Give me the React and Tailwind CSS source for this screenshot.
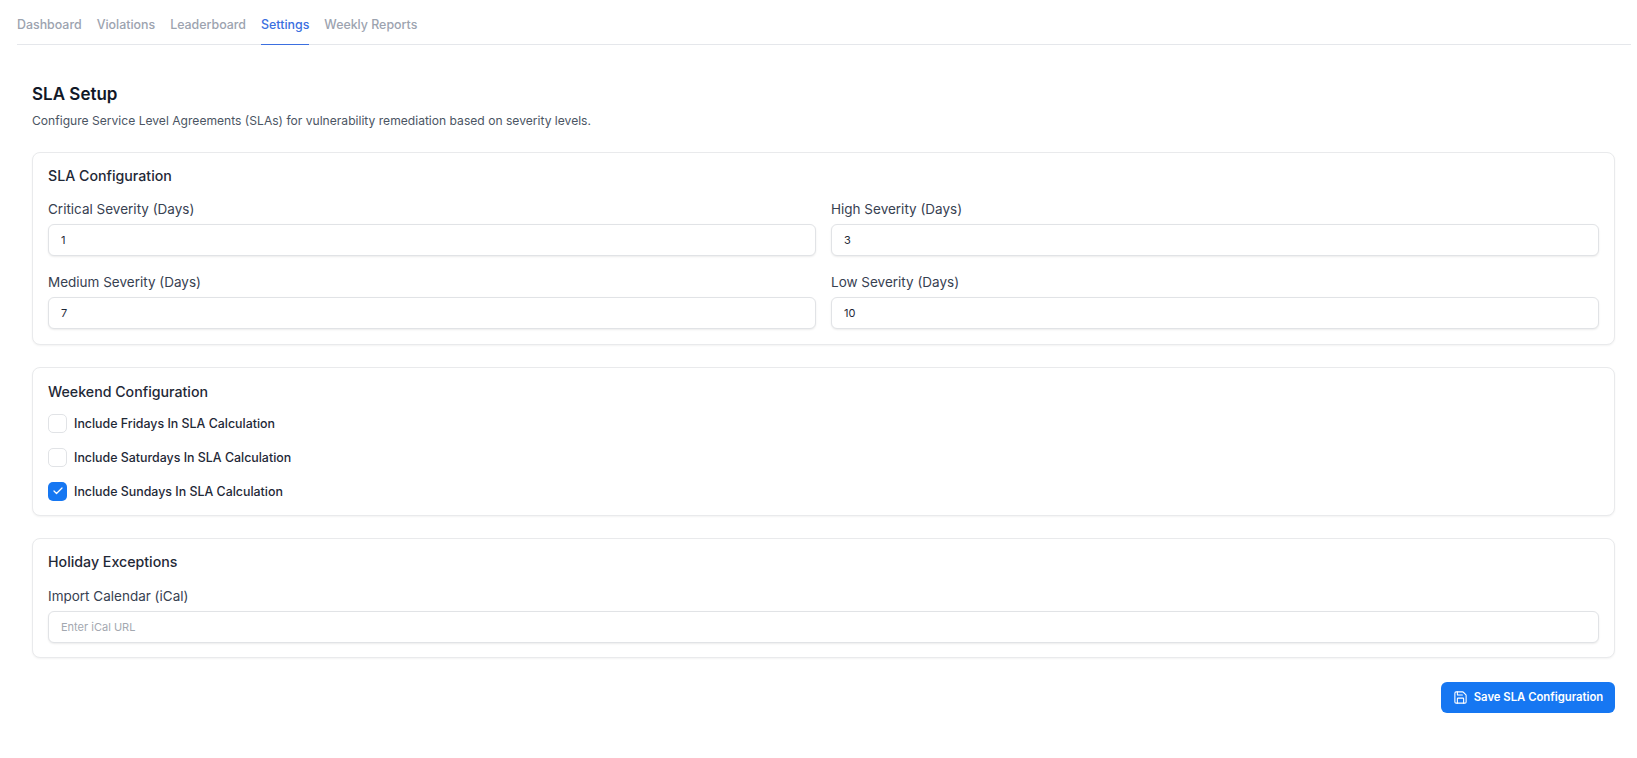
import React from "react";
import { Save, Check } from "lucide-react";

const tabs = ["Dashboard", "Violations", "Leaderboard", "Settings", "Weekly Reports"];

function Field({ label, value, placeholder }) {
  return (
    <div className="flex flex-col">
      <label className="mb-[4px] text-[13.5px] leading-[22px] text-[#374151]">{label}</label>
      <input
        readOnly
        value={value ?? ""}
        placeholder={placeholder}
        className="h-[32px] w-full rounded-[6px] border border-[#e1e3e6] bg-white px-[12px] text-[11px] text-[#1f2937] shadow-[0_1px_2px_rgba(0,0,0,0.08)] outline-none placeholder:text-[#a3a8b0]"
      />
    </div>
  );
}

function Card({ title, children, box, head }) {
  return (
    <section className={`rounded-[8px] border border-[#e9eaec] bg-white px-[15px] shadow-[0_1px_2px_rgba(0,0,0,0.05)] ${box}`}>
      <h2 className={`text-[14.2px] leading-[22px] font-medium text-[#1f2937] ${head}`}>{title}</h2>
      {children}
    </section>
  );
}

function Box({ label, checked }) {
  return (
    <label className="flex h-[20px] items-center gap-[7px]">
      <span
        className={
          checked
            ? "flex h-[19px] w-[19px] items-center justify-center rounded-[5px] bg-[#1677f2]"
            : "h-[19px] w-[19px] rounded-[5px] border border-[#e1e3e6] bg-white"
        }
      >
        {checked && <Check size={12} strokeWidth={2.5} className="text-white" />}
      </span>
      <span className="pt-[1px] text-[12.4px] leading-[20px] font-medium text-[#1f2937]">{label}</span>
    </label>
  );
}

export default function App() {
  return (
    <div className="min-h-[758px] bg-white pr-[6px] pl-[17px] [font-family:Inter,'Liberation_Sans',sans-serif]">
      <nav className="flex h-[45px] gap-[15px] border-b border-[#e5e7eb]">
        {tabs.map((t) => (
          <a
            key={t}
            className={
              t === "Settings"
                ? "-mb-px flex h-[45px] items-center border-b border-[#3b6fe0] pt-[6px] text-[12.4px] font-medium text-[#3b6fe0]"
                : "flex h-[45px] items-center pt-[5px] text-[12.4px] font-medium text-[#9ca3af]"
            }
          >
            {t}
          </a>
        ))}
      </nav>
      <main className="pt-[37px] pr-[16px] pl-[15px]">
        <h1 className="text-[17px] leading-[24px] font-semibold text-[#111827]">SLA Setup</h1>
        <p className="mt-[6px] mb-[22px] text-[12.1px] leading-[18px] text-[#4b5563]">
          Configure Service Level Agreements (SLAs) for vulnerability remediation based on severity levels.
        </p>
        <div className="flex flex-col gap-[22px]">
          <Card title="SLA Configuration" box="pt-[12px] pb-[15px]" head="mb-[11px]">
            <div className="grid grid-cols-2 gap-x-[15px] gap-y-[15px]">
              <Field label="Critical Severity (Days)" value="1" />
              <Field label="High Severity (Days)" value="3" />
              <Field label="Medium Severity (Days)" value="7" />
              <Field label="Low Severity (Days)" value="10" />
            </div>
          </Card>
          <Card title="Weekend Configuration" box="pt-[13px] pb-[14px]" head="mb-[10px]">
            <div className="flex flex-col gap-[14px]">
              <Box label="Include Fridays In SLA Calculation" />
              <Box label="Include Saturdays In SLA Calculation" />
              <Box label="Include Sundays In SLA Calculation" checked />
            </div>
          </Card>
          <Card title="Holiday Exceptions" box="pt-[12px] pb-[14px]" head="mb-[12px]">
            <Field label="Import Calendar (iCal)" placeholder="Enter iCal URL" />
          </Card>
        </div>
        <div className="mt-[24px] flex justify-end">
          <button className="flex h-[31px] w-[174px] items-center justify-center gap-[6px] rounded-[6px] bg-[#1677f2] text-[11.3px] font-semibold text-white">
            <Save size={15} strokeWidth={1.75} />
            Save SLA Configuration
          </button>
        </div>
      </main>
    </div>
  );
}
